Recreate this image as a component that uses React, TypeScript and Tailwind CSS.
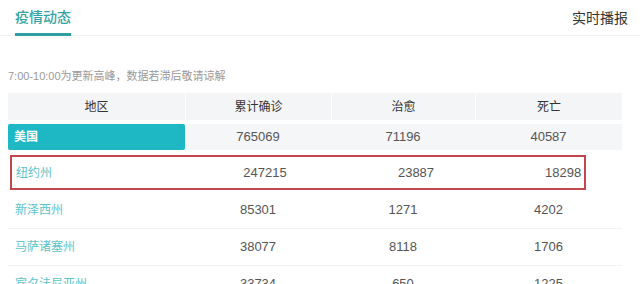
import * as React from "react";

type Row = {
  name: string;
  confirmed: string;
  cured: string;
  dead: string;
};

const rows: Row[] = [
  { name: "新泽西州", confirmed: "85301", cured: "1271", dead: "4202" },
  { name: "马萨诸塞州", confirmed: "38077", cured: "8118", dead: "1706" },
  { name: "宾夕法尼亚州", confirmed: "33734", cured: "650", dead: "1225" },
];

const cols = "grid grid-cols-[177px_146px_144px_147px]";

export default function App() {
  return (
    <div
      className="h-[284px] w-[640px] overflow-hidden bg-white text-[#555]"
      style={{ fontFamily: '"Liberation Sans", "Noto Sans CJK SC", sans-serif' }}
    >
      {/* top tabs */}
      <div className="flex h-[36px] items-start justify-between border-b border-[#f3f3f3] pl-[15px] pr-[12px]">
        <div className="border-b-[3px] border-[#2f9fa3] pt-[8px] pb-[7px] text-[14px] leading-[18px] font-medium text-[#30a2a5]">
          疫情动态
        </div>
        <div className="pt-[9px] text-[14px] leading-[18px] text-[#333]">实时播报</div>
      </div>

      <p className="mt-[32px] pl-[8px] text-[11px] leading-[16px] text-[#999]">
        7:00-10:00为更新高峰，数据若滞后敬请谅解
      </p>

      <div className="mt-[9px] ml-[8px] w-[614px]">
        {/* head */}
        <div className={`${cols} h-[27px] text-[12px] text-[#333]`}>
          {["地区", "累计确诊", "治愈", "死亡"].map((h, i) => (
            <div
              key={h}
              className={`flex items-center justify-center bg-[#f4f5f7] ${i > 0 ? "border-l border-white" : ""}`}
            >
              {h}
            </div>
          ))}
        </div>

        {/* country */}
        <div className={`${cols} mt-[4px] h-[26px] bg-[#f5f6f8] text-[13px]`}>
          <div className="flex items-center rounded-[2px] bg-[#1db8c4] pl-[6px] text-[12px] font-bold text-white">
            美国
          </div>
          <div className="flex items-center justify-center">765069</div>
          <div className="flex items-center justify-center">71196</div>
          <div className="flex items-center justify-center">40587</div>
        </div>

        {/* highlighted state */}
        <div className={`${cols} mt-[5px] ml-[2px] h-[35px] w-[576px] border-2 border-[#c2464c] text-[13px]`}>
          <div className="flex items-center pl-[4px] text-[12px] text-[#5cc4ca]">纽约州</div>
          <div className="flex items-center justify-center pl-[6px]">247215</div>
          <div className="flex items-center justify-center pl-[18px]">23887</div>
          <div className="flex items-center pl-[66px]">18298</div>
        </div>

        <div className="pt-[2px]">
          {rows.map((r) => (
            <div key={r.name} className={`${cols} h-[37px] border-b border-[#f3f3f3] text-[13px]`}>
              <div className="flex items-center pl-[7px] text-[12px] text-[#5cc4ca]">{r.name}</div>
              <div className="flex items-center justify-center">{r.confirmed}</div>
              <div className="flex items-center justify-center">{r.cured}</div>
              <div className="flex items-center justify-center">{r.dead}</div>
            </div>
          ))}
        </div>
      </div>
    </div>
  );
}
